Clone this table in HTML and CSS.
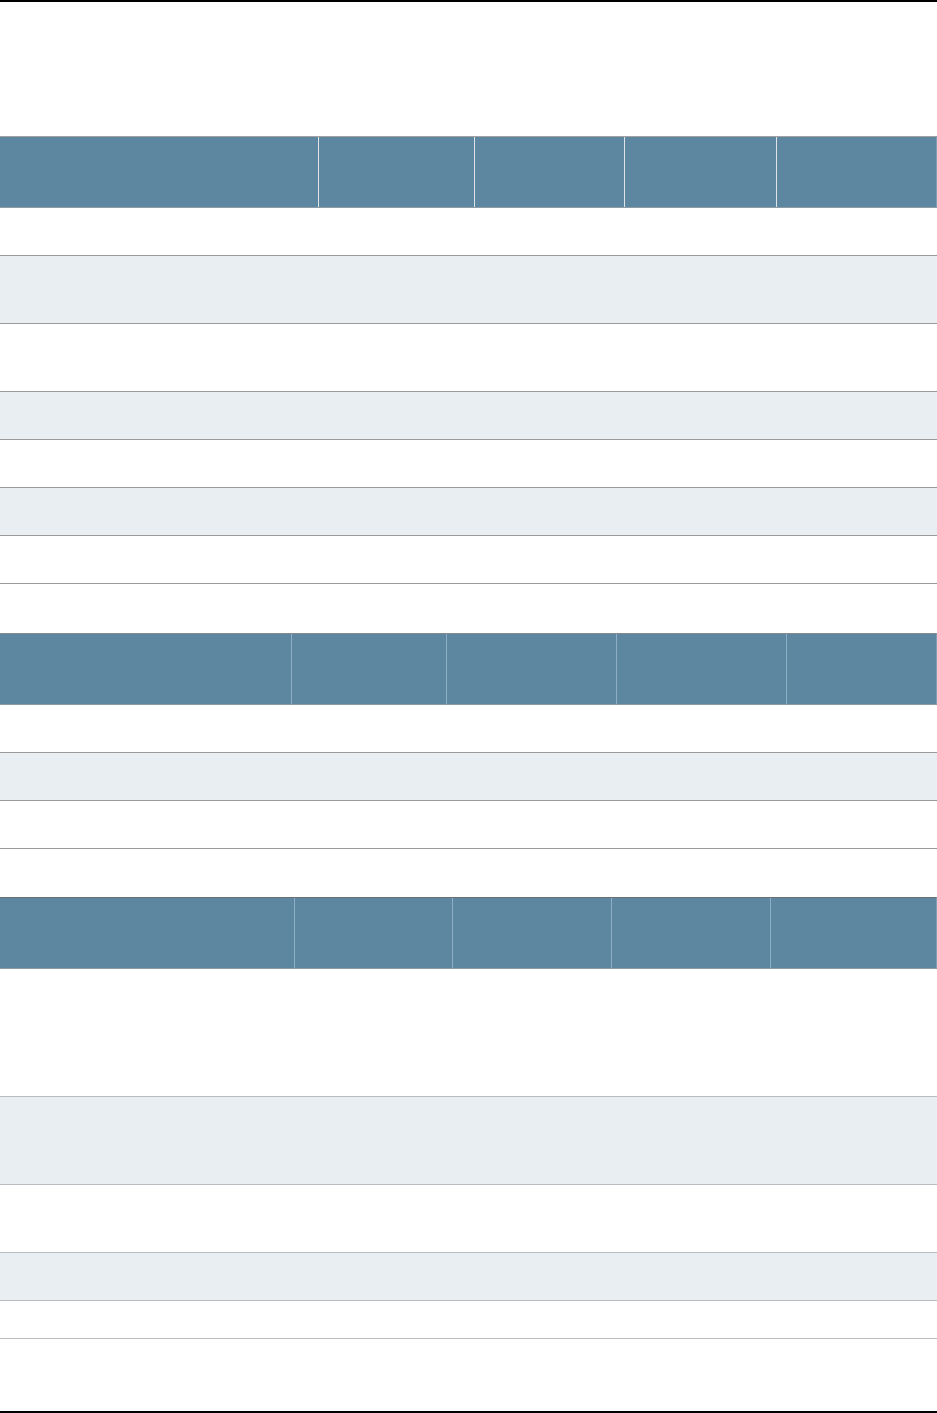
FILE: index.html
```html
<!DOCTYPE html>
<html>
<head>
<meta charset="utf-8">
<link rel="stylesheet" href="styles.css">
<title>Tables</title>
</head>
<body>
<div class="page">
  <div class="rule-top"></div>
  <div class="spacer-top"></div>

  <section class="tbl t1">
    <div class="head"><div class="hc"></div><div class="hc"></div><div class="hc"></div><div class="hc"></div><div class="hc"></div></div>
    <div class="row r48"></div>
    <div class="row alt r68"></div>
    <div class="row r68"></div>
    <div class="row alt r48"></div>
    <div class="row r48"></div>
    <div class="row alt r48"></div>
    <div class="row r48"></div>
  </section>

  <section class="tbl t2">
    <div class="head"><div class="hc"></div><div class="hc"></div><div class="hc"></div><div class="hc"></div><div class="hc"></div></div>
    <div class="row r48"></div>
    <div class="row alt r48"></div>
    <div class="row r48"></div>
  </section>

  <section class="tbl t3">
    <div class="head"><div class="hc"></div><div class="hc"></div><div class="hc"></div><div class="hc"></div><div class="hc"></div></div>
    <div class="row r128"></div>
    <div class="row alt r88"></div>
    <div class="row r68"></div>
    <div class="row alt r48"></div>
    <div class="row r38 light"></div>
    <div class="row last"></div>
  </section>

  <div class="rule-bottom"></div>
</div>
</body>
</html>
```
FILE: styles.css
```css
* { box-sizing: border-box; }
html, body { margin: 0; padding: 0; background: #ffffff; font-family: "Liberation Sans", Arial, sans-serif; }
.page { width: 937px; height: 1413px; display: flex; flex-direction: column; }
.rule-top { height: 2px; background: #000; flex: none; }
.spacer-top { height: 134px; flex: none; }
.tbl { width: 937px; display: flex; flex-direction: column; flex: none; }
.tbl + .tbl { margin-top: 49px; }
.t2 + .t3 { margin-top: 48px; }
.head {
  display: grid;
  height: 72px;
  background: #5d86a0;
  border-top: 1px solid #a2a2a2;
  border-bottom: 1px solid #8d9ba5;
  border-right: 1px solid #7f9fb5;
}
.t1 .head { grid-template-columns: 318px 156px 150px 152px 1fr; }
.t2 .head { grid-template-columns: 291px 155px 170px 170px 1fr; border-top-color: #8a8a8a; }
.t3 .head { grid-template-columns: 294px 158px 159px 159px 1fr; border-top-color: #6f6f6f; }
.hc + .hc { border-left: 1px solid #dfe3e6; }
.t2 .hc + .hc, .t3 .hc + .hc { border-left-color: #8eb0c7; }
.row { background: #ffffff; border-bottom: 1px solid #9a9a9a; }
.row.alt { background: #e9eef2; }
.t3 .row { border-bottom-color: #b9bcc0; }
.r38 { height: 38px; }
.r48 { height: 48px; }
.r68 { height: 68px; }
.r88 { height: 88px; }
.r128 { height: 128px; }
.row.last { flex: none; height: 72px; border-bottom: none; }
.rule-bottom { height: 2px; background: #000; margin-top: auto; flex: none; }
```
